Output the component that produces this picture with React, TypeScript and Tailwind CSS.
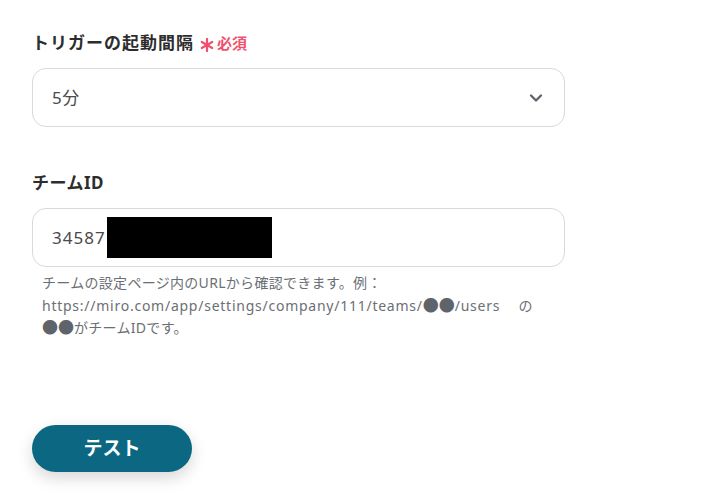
import { ChevronDown } from "lucide-react";

function Asterisk() {
  return (
    <svg width="14" height="14" viewBox="0 0 14 14" className="mt-[3px]">
      <g stroke="#f0506e" strokeWidth="2.2" strokeLinecap="round">
        <line x1="7" y1="1" x2="7" y2="13" />
        <line x1="1.8" y1="4" x2="12.2" y2="10" />
        <line x1="1.8" y1="10" x2="12.2" y2="4" />
      </g>
    </svg>
  );
}

// full-width circles as drawn in the hint text
function Dots() {
  return <span className="font-['Noto_Sans_CJK_JP',sans-serif] text-[16px] tracking-normal text-[#5f636a]">●●</span>;
}

export default function App() {
  return (
    <div className="min-h-[493px] w-[708px] bg-white font-['Noto_Sans','Noto_Sans_CJK_JP',sans-serif] text-[#333333]">
      <div className="px-[32px] pt-[30px]">
        {/* Trigger interval */}
        <div className="flex h-[26px] items-center">
          <span className="text-[17px] font-bold tracking-[1px] text-[#2d2d2d]">トリガーの起動間隔</span>
          <span className="ml-[6px] flex items-center gap-[3px] text-[15px] font-bold text-[#f0506e]">
            <Asterisk />
            必須
          </span>
        </div>
        <div className="mt-[12px] flex h-[59px] w-[533px] items-center justify-between rounded-[14px] border border-[#d5d9e0] pl-[19px] pr-[18px]">
          <span className="text-[17px] tracking-[0.6px] text-[#4a4a4a]">5分</span>
          <ChevronDown className="h-[20px] w-[20px] text-[#5f6368]" strokeWidth={2.8} />
        </div>

        {/* Team ID */}
        <div className="mt-[43px] flex h-[26px] items-center">
          <span className="text-[17px] font-bold tracking-[0.5px] text-[#2d2d2d]">チームID</span>
        </div>
        <div className="mt-[12px] flex h-[59px] w-[533px] items-center rounded-[14px] border border-[#d5d9e0] pl-[19px]">
          <span className="text-[17px] tracking-[1px] text-[#4a4a4a]">34587</span>
          <div className="ml-[1px] h-[41px] w-[165px] bg-black" />
        </div>
        <div className="mt-[5px] pl-[10px] text-[14px] leading-[21.5px] tracking-[0.3px] text-[#6b6f75]">
          <p>チームの設定ページ内のURLから確認できます。例：</p>
          <p>
            <span className="tracking-[0.75px]">https://miro.com/app/settings/company/111/teams/</span>
            <Dots />
            <span className="tracking-[0.75px]">/users</span>
            <span className="ml-[4px]">　の</span>
          </p>
          <p>
            <Dots />
            がチームIDです。
          </p>
        </div>

        {/* Test button */}
        <button className="mt-[86px] flex h-[47px] w-[160px] items-center justify-center rounded-full bg-[#0c6882] text-[19px] font-bold text-white shadow-[0_6px_16px_rgba(0,0,0,0.16)]">
          テスト
        </button>
      </div>
    </div>
  );
}
